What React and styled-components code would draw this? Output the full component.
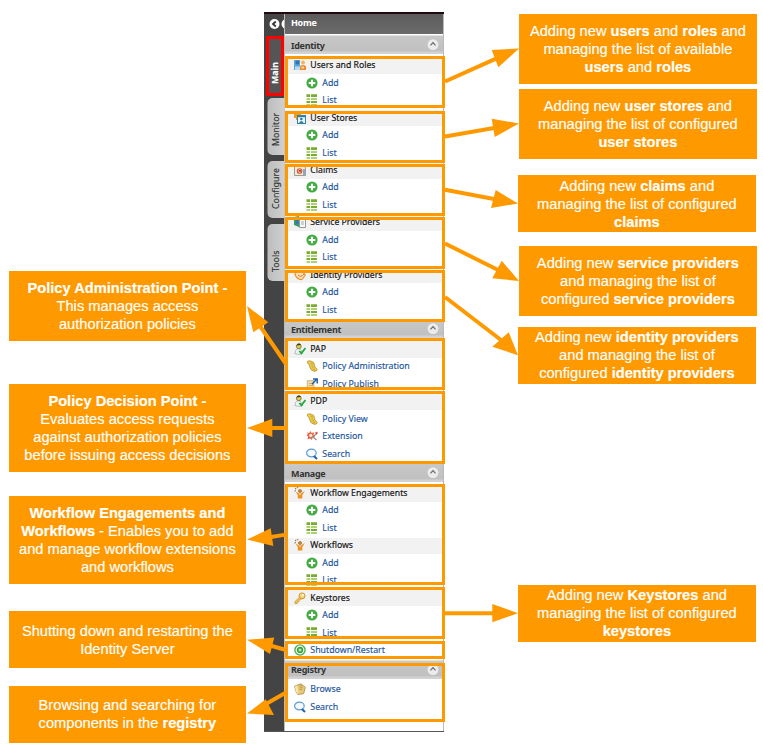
import React from "react";
import styled, { createGlobalStyle, css } from "styled-components";

const ORANGE = "#ff9900";

const GlobalStyle = createGlobalStyle`
  * { box-sizing: border-box; }
  body { margin: 0; background: #fff; }
`;

const Page = styled.main`
  position: relative;
  display: flex;
  align-items: flex-start;
  width: 763px;
  height: 753px;
  overflow: hidden;
  background: #fff;
`;

const CalloutColumn = styled.section`
  display: flex;
  flex-direction: column;
  flex: none;
  width: 238px;
  margin-left: ${(p) => p.$left}px;
`;

const Callout = styled.div`
  display: flex;
  align-items: center;
  justify-content: center;
  width: 237.8px;
  height: ${(p) => p.$height}px;
  margin-top: ${(p) => p.$gap}px;
  margin-left: ${(p) => p.$shift || 0}px;
  background: ${ORANGE};
  color: #fff;
  font: 14.67px/18px "Liberation Sans", Arial, sans-serif;
  -webkit-text-stroke: 0.15px #fff;
  text-align: center;
  white-space: nowrap;
`;

const Console = styled.nav`
  display: flex;
  flex: none;
  width: 180px;
  height: 719.5px;
  margin: 12px 0 0 17.5px;
  border-top: 2px solid #1f0a12;
  border-bottom: 1px solid #555;
  background: #444;
  overflow: hidden;
  font-family: "Noto Sans", "Open Sans", sans-serif;
`;

const TabRail = styled.div`
  display: flex;
  flex-direction: column;
  align-items: flex-end;
  flex: none;
  width: 20px;
`;

const RailTop = styled.div`
  display: flex;
  height: 23px;
  width: 20px;
  padding: 3.5px 0 0 5px;
  gap: 1px;
  overflow: hidden;
  svg { flex: none; }
`;

const Tab = styled.div`
  display: flex;
  align-items: center;
  justify-content: flex-start;
  width: ${(p) => (p.$active ? 18 : 16.5)}px;
  height: ${(p) => (p.$active ? 60 : 57)}px;
  margin-top: ${(p) => p.$gap}px;
  padding-top: ${(p) => (p.$active ? 9 : 8.5)}px;
  writing-mode: vertical-rl;
  transform: rotate(180deg);
  border-radius: 0 5px 5px 0;
  background: linear-gradient(to left, #bdbdbd, #d0d0d0);
  color: #333;
  font-size: 8.8px;
  line-height: 16px;
  -webkit-text-stroke: 0.15px currentColor;
  ${(p) =>
    p.$active &&
    css`
      border: 3px solid #f00;
      border-radius: 0;
      background: #555;
      color: #fff;
      font-weight: 700;
      line-height: 12px;
    `}
`;

const Menu = styled.div`
  display: flex;
  flex-direction: column;
  flex: 1;
  background: #fff;
  border-left: 1px solid #bbb;
  border-right: 1px solid #bbb;
`;

const HomeBar = styled.div`
  height: 20px;
  padding-left: 6px;
  background: linear-gradient(#5c5c5c, #6b6b6b);
  color: #fff;
  font-size: 9px;
  font-weight: 700;
  line-height: 17px;
  letter-spacing: -0.3px;
`;

const SectionBar = styled.div`
  display: flex;
  align-items: center;
  justify-content: space-between;
  height: 22px;
  margin-bottom: ${(p) => p.$after || 0}px;
  padding: 0 4px 0 6px;
  background: linear-gradient(#fff 1px, #c8c8c8 2px, #c0c0c0 17px, #d2d2d2 18px, #d2d2d2 20px, #fff 20.5px);
  color: #333;
  font-size: 9px;
  font-weight: 700;
  letter-spacing: -0.3px;
`;

const Row = styled.div`
  display: flex;
  align-items: center;
  gap: 4.3px;
  height: 17.45px;
  padding-top: 1px;
  padding-left: ${(p) => (p.$sub ? 21 : 9)}px;
  background: ${(p) => (p.$head ? "linear-gradient(#fff 1px, #f2f2f2 1px)" : "#fff")};
  color: ${(p) => (p.$head ? "#111" : "#1c559e")};
  font-size: ${(p) => (p.$head ? 8.7 : 8.8)}px;
  line-height: 17px;
  -webkit-text-stroke: 0.15px currentColor;
  white-space: nowrap;
  svg {
    flex: none;
    margin-top: -1px;
  }
`;

const Overlay = styled.svg`
  position: absolute;
  inset: 0;
  pointer-events: none;
`;

const Frame = styled.div`
  position: absolute;
  left: 284.5px;
  width: 160.5px;
  top: ${(p) => p.$top}px;
  height: ${(p) => p.$height}px;
  border: 3px solid ${ORANGE};
`;

const glyphs = {
  users: (
    <>
      <rect x="0" y="1" width="6" height="10" fill="#5aa4d8" />
      <circle cx="3.4" cy="3.5" r="2" fill="#2f74b5" />
      <path d="M1 11V7.5h5V11z" fill="#b8dcf2" />
      <circle cx="9" cy="3.5" r="2" fill="#f4b35c" />
      <path d="M6 11V8q0-2 3-2t3 2v3z" fill="#ee8a2c" />
      <path d="M7.5 7.5h2.5v2H7.5z" fill="#fde0b5" />
    </>
  ),
  stores: (
    <>
      <path d="M0 0h5v2h2v6H2V6H0z" fill="#f29a24" />
      <rect x="3.5" y="3.5" width="8" height="8" fill="#eaf5fb" stroke="#31849f" />
      <rect x="3.5" y="3.2" width="8" height="2" fill="#31849f" />
      <circle cx="7.3" cy="7" r="1.3" fill="#287fa5" />
      <path d="M5.2 11q2-4 4.4 0z" fill="#287fa5" />
    </>
  ),
  claims: (
    <>
      <path d="M.5.5h7l4 3v8H.5z" fill="#f0eadc" stroke="#a59a88" />
      <path d="M9 5h2.5v6H9z" fill="#8ca9ca" />
      <circle cx="5.6" cy="7" r="2.3" fill="none" stroke="#d4582f" strokeWidth="1.1" />
      <path d="M4.6 6h2.4v1.8H4.6z" fill="#c93b28" />
    </>
  ),
  service: (
    <>
      <path d="M0 1l5-1v11l-5-2z" fill="#2d9b6a" />
      <path d="M2 1h2.5v7H2z" fill="#3d75ba" />
      <path d="M5.5 3.5h6v8h-6z" fill="#f7f7f7" stroke="#999" />
      <path d="M7 6h3M7 8h3" stroke="#aaa" />
    </>
  ),
  identity: (
    <>
      <path d="M.8 5q3-4 6-3t4.5 4L8 10.5Q3 11 .8 5z" fill="#fbe3c0" stroke="#e89438" strokeWidth="1.2" />
      <path d="M4 6q3 3 6-1" stroke="#db7a2e" fill="none" />
    </>
  ),
  policy: (
    <>
      <path d="M.8 10.5Q1 6 4.2 5.5q3 .2 4.5 5Q5 12.5.8 10.5z" fill="#eef3f6" stroke="#a5b2ba" strokeWidth=".8" />
      <circle cx="4.8" cy="3.3" r="2.4" fill="#e8cf48" stroke="#67642f" strokeWidth=".8" />
      <path d="M2.6 2.4Q3.4 0 6 .7l1 1.4z" fill="#37371f" />
      <path d="M5.3 8l2.1 2.4L11.5 5" fill="none" stroke="#20ac32" strokeWidth="1.8" />
    </>
  ),
  add: (
    <>
      <circle cx="6" cy="6" r="5.6" fill="#43ad43" />
      <path d="M6 2.7v6.6M2.7 6h6.6" stroke="#fff" strokeWidth="2.1" />
    </>
  ),
  list: (
    <>
      <path d="M.5.3h3.6v2.7H.5zM5 .3h6v2.7H5zM.5 7h3.6v2H.5zM5 7h6v2H5z" fill="#79ad32" />
      <path d="M.5 4.2h3.6v1.6H.5zM5 4.2h6v1.6H5zM.5 10.2h3.6v1.5H.5zM5 10.2h6v1.5H5z" fill="#93c444" />
    </>
  ),
  scroll: (
    <>
      <path d="M1.5 1.2Q3 .1 6.5 1.6q2 .8 1.9 3 .1 3.2 2.9 4.8-.5 2-2.5 2-4.6-.8-5.3-5Q3.5 3.8 2 3.7 1 2.7 1.5 1.2z" fill="#ecca4c" stroke="#ad8727" strokeWidth=".7" />
      <path d="M4.5 3l2.4.8M5.2 5l2 .4M5.8 7l2 .5M7 9l2 .5" stroke="#b18c2a" strokeWidth=".6" />
    </>
  ),
  publish: (
    <>
      <path d="M1.3 2.7h6.5v8.8l-6.5-.8z" fill="#f2dfb0" stroke="#bba16c" strokeWidth=".8" />
      <path d="M3 5.5h3M3 7.5h4" stroke="#bd9b5b" strokeWidth=".7" />
      <path d="M6 6.2l4.3-4.7M7 1h4.2v4.4" stroke="#255fa9" strokeWidth="1.5" fill="none" />
    </>
  ),
  extension: (
    <>
      <path d="M1 2l2 1.3L4.3 1l1.3 2 2.6-.8-.7 2.5L9 7l-2.4.6L6 10 4.2 8.4 1.5 9.2l.6-2.6L.4 5 2 4z" fill="#e96543" />
      <circle cx="4.8" cy="5.4" r="1.6" fill="#fbe7dd" />
      <path d="M5 8l6-4.5M7 7l3.5 3" stroke="#9b8b84" strokeWidth="1.2" />
      <circle cx="10.5" cy="3" r="1.2" fill="#d65a3d" />
    </>
  ),
  search: (
    <>
      <ellipse cx="5.4" cy="5" rx="4.8" ry="3.8" fill="#f5faff" stroke="#5c9bd4" strokeWidth="1.2" />
      <path d="M7.8 8l3.2 3" stroke="#1f62ae" strokeWidth="2.1" />
    </>
  ),
  workflow: (
    <>
      <path d="M1 4.5L1.7 1l3-.5" stroke="#8d6c3b" strokeWidth="1" strokeDasharray="1.5 .8" fill="none" />
      <circle cx="6" cy="4" r="1.6" fill="#d38a25" stroke="#755022" strokeWidth=".5" />
      <path d="M1.5 4.5L5 6.5h2l3.8-2.7-2.5 4.4v3.2H3.8V8z" fill="#ef911e" />
      <path d="M5.2 7h1.6L6 8.4z" fill="#fff0ce" />
    </>
  ),
  key: (
    <>
      <circle cx="8" cy="3.9" r="3" fill="#f6d878" stroke="#c68e28" strokeWidth=".9" />
      <circle cx="9" cy="3" r=".9" fill="#fff" />
      <path d="M5.6 5.2L.8 9.7l.3 1.8h2l.4-1.5 1.2-.1.3-1.4 2.3-1.8z" fill="#f1c24d" stroke="#c68e28" strokeWidth=".7" />
    </>
  ),
  power: (
    <>
      <circle cx="6" cy="6" r="5.1" fill="#fff" stroke="#49b149" strokeWidth="1.4" />
      <circle cx="6" cy="6" r="2.6" fill="#72c36c" stroke="#36a13c" strokeWidth="1.3" />
      <circle cx="6" cy="6" r="1" fill="#d5efd1" />
    </>
  ),
  browse: (
    <>
      <path d="M.7 3L7 .8l4.4 3.6-1.8 6.3-5.8.8L1.7 8z" fill="#e8cb79" stroke="#ad8a42" strokeWidth=".8" />
      <path d="M5 3l3.5-.4M5.3 5l3.3-.5M5.5 6.7l3-.4" fill="none" stroke="#a98742" strokeWidth=".7" />
      <path d="M1 3l2-.5 1.5 7L3.8 11 1.7 8z" fill="#f8e8ad" />
    </>
  ),
};

const Icon = ({ name }) => (
  <svg width="12" height="12" viewBox="0 0 12 12">{glyphs[name]}</svg>
);

const CollapseIcon = () => (
  <svg width="12" height="12" viewBox="0 0 12 12">
    <circle cx="6" cy="5.6" r="5.4" fill="#ececec" />
    <path d="M3.5 6.4L6 3.6l2.5 2.8" fill="none" stroke="#666" strokeWidth="1.1" />
  </svg>
);

const BackIcon = () => (
  <svg width="11" height="12" viewBox="0 0 11 12">
    <circle cx="5.5" cy="6" r="5" fill="#fff" />
    <path d="M6.8 3.5L4 6l2.8 2.5" fill="none" stroke="#333" strokeWidth="1.8" />
  </svg>
);

const addList = [["add", "Add"], ["list", "List"]];
const sections = [
  {
    title: "Identity",
    groups: [
      ["users", "Users and Roles", addList],
      ["stores", "User Stores", addList],
      ["claims", "Claims", addList],
      ["service", "Service Providers", addList],
      ["identity", "Identity Providers", addList],
    ],
  },
  {
    title: "Entitlement",
    groups: [
      ["policy", "PAP", [["scroll", "Policy Administration"], ["publish", "Policy Publish"]]],
      ["policy", "PDP", [["scroll", "Policy View"], ["extension", "Extension"], ["search", "Search"]]],
    ],
  },
  {
    title: "Manage",
    groups: [
      ["workflow", "Workflow Engagements", addList],
      ["workflow", "Workflows", addList],
      ["key", "Keystores", addList],
    ],
    links: [["power", "Shutdown/Restart"]],
  },
  { title: "Registry", groups: [], links: [["browse", "Browse"], ["search", "Search"]] },
];

const frames = [
  [55.5, 52], [111, 52.3], [163.7, 52], [216.7, 52.3], [269.5, 52],
  [338, 52], [391, 73], [483.7, 101.3], [587.3, 52], [640.7, 18.5], [662.5, 59.5],
];

const arrows = [
  ["M445 81.5L496 58.6", "519,48.5 491.7,50 498.3,67.3"],
  ["M445 136.5L494 128", "519,123.5 491.7,118.7 494.7,137"],
  ["M445 189.7L494 199", "518,203.5 495.7,190 491,208"],
  ["M445 243.5L498 270", "519,281 501.7,260.7 492.3,278.3"],
  ["M445 297L501 340", "518,355.3 508.7,332.3 492.3,346.7"],
  ["M445 613.2L494 613.2", "518,613.2 492.3,604 492.3,622.3"],
  ["M286 364L260 326", "247,306 268.3,322.3 253.3,332.3"],
  ["M286 428L271 428", "247,428 272.3,418.7 272.3,437"],
  ["M286 534.6L271 537", "247,539.5 270.7,528.3 273.3,546"],
  ["M286 650L271 645.8", "247,639.7 274.3,637.5 270,654"],
  ["M286 692.5L266 704", "247,713.5 265.7,699.3 274,715"],
];

export default function App() {
  return (
    <Page>
      <GlobalStyle />
      <CalloutColumn $left={8.5}>
        <Callout $gap={271} $height={70}>
          <div><b>Policy Administration Point -</b><br />This manages access<br />authorization policies</div>
        </Callout>
        <Callout $gap={43.3} $height={87.3}>
          <div><b>Policy Decision Point -</b><br />Evaluates access requests<br />against authorization policies<br />before issuing access decisions</div>
        </Callout>
        <Callout $gap={24.6} $height={87.6}>
          <div><b>Workflow Engagements and</b><br /><b>Workflows</b> - Enables you to add<br />and manage workflow extensions<br />and workflows</div>
        </Callout>
        <Callout $gap={27.3} $height={57}>
          <div>Shutting down and restarting the<br />Identity Server</div>
        </Callout>
        <Callout $gap={17.7} $height={57}>
          <div>Browsing and searching for<br />components in the <b>registry</b></div>
        </Callout>
      </CalloutColumn>

      <Console>
        <TabRail>
          <RailTop><BackIcon /><BackIcon /></RailTop>
          <Tab $active $gap={-1}>Main</Tab>
          <Tab $gap={1.5}>Monitor</Tab>
          <Tab $gap={6}>Configure</Tab>
          <Tab $gap={6}>Tools</Tab>
        </TabRail>
        <Menu>
          <HomeBar>Home</HomeBar>
          {sections.map((s, i) => (
            <React.Fragment key={s.title}>
              <SectionBar $after={i === 0 ? 0.7 : 0}>{s.title}<CollapseIcon /></SectionBar>
              {s.groups.map(([icon, label, items]) => (
                <React.Fragment key={label}>
                  <Row $head><Icon name={icon} />{label}</Row>
                  {items.map(([ic, text]) => (
                    <Row $sub key={text}><Icon name={ic} />{text}</Row>
                  ))}
                </React.Fragment>
              ))}
              {(s.links || []).map(([ic, text]) => (
                <Row key={text}><Icon name={ic} />{text}</Row>
              ))}
            </React.Fragment>
          ))}
        </Menu>
      </Console>

      <CalloutColumn $left={74}>
        <Callout $gap={13.7} $height={70} $shift={1}>
          <div>Adding new <b>users</b> and <b>roles</b> and<br />managing the list of available<br /><b>users</b> and <b>roles</b></div>
        </Callout>
        <Callout $gap={5.3} $height={70} $shift={1}>
          <div>Adding new <b>user stores</b> and<br />managing the list of configured<br /><b>user stores</b></div>
        </Callout>
        <Callout $gap={16.3} $height={57}>
          <div>Adding new <b>claims</b> and<br />managing the list of configured<br /><b>claims</b></div>
        </Callout>
        <Callout $gap={13.5} $height={70} $shift={1}>
          <div>Adding new <b>service providers</b><br />and managing the list of<br />configured <b>service providers</b></div>
        </Callout>
        <Callout $gap={11.2} $height={57}>
          <div>Adding new <b>identity providers</b><br />and managing the list of<br />configured <b>identity providers</b></div>
        </Callout>
        <Callout $gap={200.7} $height={57}>
          <div>Adding new <b>Keystores</b> and<br />managing the list of configured<br /><b>keystores</b></div>
        </Callout>
      </CalloutColumn>

      {frames.map(([top, height]) => (
        <Frame key={top} $top={top} $height={height} />
      ))}
      <Overlay width="763" height="753" viewBox="0 0 763 753">
        {arrows.map(([line, head]) => (
          <g key={line}>
            <path d={line} stroke={ORANGE} strokeWidth="4" />
            <polygon points={head} fill={ORANGE} />
          </g>
        ))}
      </Overlay>
    </Page>
  );
}
